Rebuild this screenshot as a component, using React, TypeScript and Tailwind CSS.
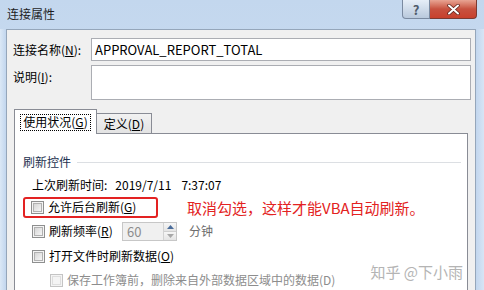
import React from "react";

const font = { fontFamily: '"Noto Sans CJK SC", "Noto Sans", sans-serif' };

function Check({ disabled = false }: { disabled?: boolean }) {
  return (
    <div
      className={`w-[13px] h-[13px] border flex items-center justify-center shrink-0 ${
        disabled ? "border-[#c4c4c4] bg-[#f4f4f4]" : "border-[#8e8f8f] bg-[#f4f4f4]"
      }`}
    >
      <div
        className={`w-[9px] h-[9px] border ${
          disabled
            ? "border-[#dedede] bg-[#f4f4f4]"
            : "border-[#b1b1b1] bg-gradient-to-br from-[#d6d6d6] to-[#f6f6f6]"
        }`}
      />
    </div>
  );
}

export default function App() {
  return (
    <div
      className="w-[484px] h-[290px] overflow-hidden bg-gradient-to-b from-[#c3d7ee] to-[#d4e3f4] text-[12px] text-black leading-none"
      style={font}
    >
      {/* title bar */}
      <div className="h-[29px] flex items-start justify-between">
        <div className="pl-[7px] pt-[8px] text-[12px] text-[#1e1e1e]">连接属性</div>
        <div className="flex mr-[7px]">
          <div className="w-[28px] h-[19px] rounded-bl-[4px] border border-t-0 border-[#7a8aa0] bg-gradient-to-b from-[#e6eef7] to-[#b9c9dc] flex items-center justify-center text-[13px] text-[#4f5b6b] font-bold">
            ?
          </div>
          <div className="w-[47px] h-[19px] rounded-br-[4px] border border-t-0 border-l-0 border-[#7a3a32] bg-gradient-to-b from-[#e8a493] via-[#c7513f] to-[#c8402c] flex items-center justify-center">
            <svg width="13" height="11" viewBox="0 0 13 11">
              <path d="M2 1.5 L11 9.5 M11 1.5 L2 9.5" stroke="#5a2018" strokeWidth="3.4" strokeLinecap="round" />
              <path d="M2 1.5 L11 9.5 M11 1.5 L2 9.5" stroke="#ffffff" strokeWidth="2" strokeLinecap="round" />
            </svg>
          </div>
        </div>
      </div>

      <div className="flex h-[261px]">
        <div className="w-[6px] bg-gradient-to-r from-[#dbe8f6] to-[#c2d6ee]" />
        {/* client */}
        <div className="flex-1 bg-[#f0f0f0] border-l border-t border-r border-[#95a6ba] pt-[8px] pr-[4px]">
          <div className="flex items-center h-[23px]">
            <div className="w-[84px] pl-[6px]">
              连接名称(<span className="underline">N</span>):
            </div>
            <div className="flex-1 h-[23px] bg-white border border-[#abadb3] flex items-center pl-[3px] text-[13px]">
              APPROVAL_REPORT_TOTAL
            </div>
          </div>
          <div className="flex items-start mt-[4px] h-[35px]">
            <div className="w-[84px] pl-[6px] pt-[6px]">
              说明(<span className="underline">I</span>):
            </div>
            <div className="flex-1 h-[35px] bg-white border border-[#abadb3]" />
          </div>

          {/* tabs */}
          <div className="ml-[7px] mr-[3px] mt-[10px]">
            <div className="flex items-end h-[24px]">
              <div className="w-[83px] h-[25px] bg-white border border-b-0 border-[#898c95] relative z-10 flex items-center justify-center">
                <div className="border border-dotted border-black px-[2px] h-[17px] flex items-center">
                  使用状况(<span className="underline">G</span>)
                </div>
              </div>
              <div className="w-[55px] h-[21px] border border-l-0 border-[#898c95] bg-gradient-to-b from-[#f2f2f2] to-[#e3e3e3] flex items-center justify-center">
                定义(<span className="underline">D</span>)
              </div>
            </div>
            <div className="bg-white border border-[#898c95] h-[160px] -mt-px pl-[8px] pr-[6px]">
              <div className="flex items-center h-[14px] mt-[21px]">
                <span className="text-[#1e3250]">刷新控件</span>
                <div className="flex-1 h-px bg-[#dcdfe3] ml-[6px]" />
              </div>
              <div className="pl-[9px] mt-[9px] h-[14px] flex items-center">
                <span>上次刷新时间:</span>
                <span className="ml-[8px]">2019/7/11</span>
                <span className="ml-[10px]">7:37:07</span>
              </div>
              <div className="flex items-center h-[22px] mt-[4px]">
                <div className="flex items-center h-[21px] w-[135px] border-[2.5px] border-[#e32222] rounded-[3px] pl-[6px]">
                  <Check />
                  <span className="ml-[4px]">
                    允许后台刷新(<span className="underline">G</span>)
                  </span>
                </div>
                <span className="ml-[29px] text-[15px] text-[#e32222]">取消勾选，这样才能VBA自动刷新。</span>
              </div>
              <div className="flex items-center h-[20px] mt-[3px] pl-[9px]">
                <Check />
                <span className="ml-[4px] w-[73px]">
                  刷新频率(<span className="underline">R</span>)
                </span>
                <div className="w-[55px] h-[19px] border border-[#c7c7c7] bg-[#f0f0f0] flex items-center">
                  <span className="flex-1 pl-[4px] text-[13px] text-[#8d8d8d]">60</span>
                  <div className="w-[13px] h-[17px] flex flex-col border-l border-[#d2d2d2]">
                    <div className="flex-1 flex items-center justify-center bg-gradient-to-b from-[#f6f6f6] to-[#e4e4e4] border-b border-[#cfcfcf]">
                      <svg width="7" height="4" viewBox="0 0 7 4"><path d="M0 4 L3.5 0 L7 4 Z" fill="#4a6c9a" /></svg>
                    </div>
                    <div className="flex-1 flex items-center justify-center bg-gradient-to-b from-[#f6f6f6] to-[#e4e4e4]">
                      <svg width="7" height="4" viewBox="0 0 7 4"><path d="M0 0 L3.5 4 L7 0 Z" fill="#a8a8a8" /></svg>
                    </div>
                  </div>
                </div>
                <span className="ml-[12px] text-[#6d6d6d]">分钟</span>
              </div>
              <div className="flex items-center h-[20px] mt-[5px] pl-[9px]">
                <Check />
                <span className="ml-[4px]">
                  打开文件时刷新数据(<span className="underline">O</span>)
                </span>
              </div>
              <div className="flex items-center h-[20px] mt-[4px] pl-[27px]">
                <Check disabled />
                <span className="ml-[4px] text-[#8d8d8d] flex-1">保存工作簿前，删除来自外部数据区域中的数据(D)</span>
                <span className="text-[15px] text-[#b4b4b4] mr-[-2px] -mt-[18px]">知乎 @下小雨</span>
              </div>
            </div>
          </div>
        </div>
        <div className="w-[8px] bg-gradient-to-r from-[#c2d6ee] to-[#d7e5f5]" />
      </div>
    </div>
  );
}
